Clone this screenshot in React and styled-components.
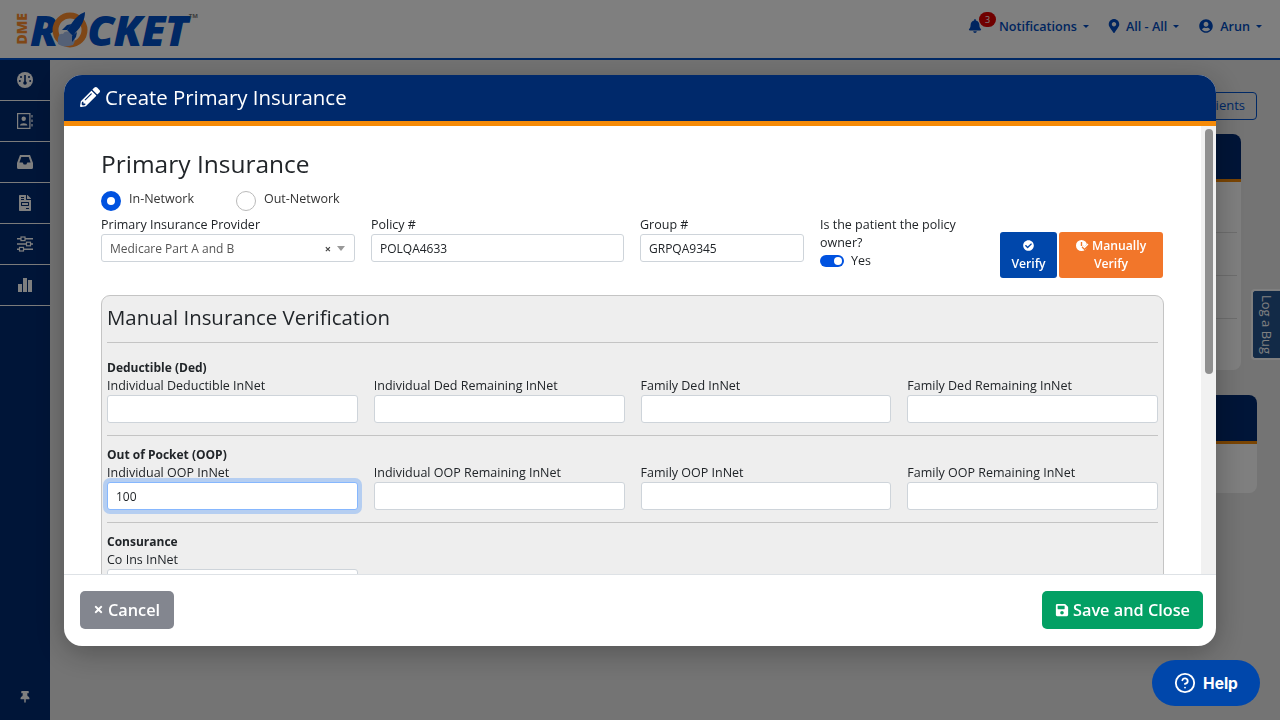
import React from 'react';
import styled, { createGlobalStyle } from 'styled-components';
import {
  FaPencilAlt, FaBell, FaMapMarkerAlt, FaUserCircle, FaFileInvoice, FaThumbtack, FaCheckCircle, FaSave, FaTimes,
} from 'react-icons/fa';
import { FiHelpCircle } from 'react-icons/fi';

const GlobalStyle = createGlobalStyle`
  html, body {
    margin: 0;
    height: 100%;
    overflow: hidden;
    font-family: "Open Sans", "Liberation Sans", sans-serif;
    color: #212529;
  }
  * { box-sizing: border-box; }
`;

const Page = styled.div`
  display: flex;
  flex-direction: column;
  height: 720px;
  background: #e9e9e9;
`;

const TopBar = styled.header`
  display: flex;
  align-items: center;
  justify-content: space-between;
  height: 60px;
  flex: none;
  padding: 0 18px 0 15px;
  background: #fff;
  border-bottom: 2px solid #0052cc;
`;

const Logo = styled.div`
  display: flex;
  align-items: center;
  color: #0050c8;
`;

const LogoDme = styled.span`
  writing-mode: vertical-rl;
  transform: rotate(180deg);
  margin-right: 2px;
  font-size: 14px;
  font-weight: 800;
  line-height: 13px;
  color: #ff8f2e;
`;

const LogoWord = styled.span`
  font-size: 43px;
  font-weight: 800;
  font-style: italic;
  letter-spacing: -0.8px;
`;

const LogoO = styled.svg`
  width: 37px;
  height: 37px;
  flex: none;
  margin: 1px -2px 0 -5px;
`;

const LogoTm = styled.sup`
  align-self: flex-start;
  margin: 12px 0 0 1px;
  font-size: 6px;
  line-height: 8px;
  font-weight: 700;
  color: #777;
`;

const NavLinks = styled.nav`
  display: flex;
  align-items: center;
  gap: 20px;
  margin-bottom: 6px;
`;

const NavLink = styled.div`
  display: flex;
  align-items: center;
  gap: 7px;
  font-size: 12.6px;
  font-weight: 600;
  color: #004bc0;
  svg { font-size: 14px; flex: none; margin: 0 ${p => p.$iconInset || 0}px; }
`;

const Caret = styled.span`
  width: 0;
  height: 0;
  margin-left: -1px;
  border-top: 3px solid currentColor;
  border-left: 3px solid transparent;
  border-right: 3px solid transparent;
`;

const BellWrap = styled.span`
  position: relative;
  display: flex;
  margin-right: 10px;
`;

const Badge = styled.span`
  position: absolute;
  top: -7px;
  left: 11px;
  width: 17px;
  height: 15px;
  border-radius: 8px;
  background: #e00000;
  color: #fff;
  font-size: 9px;
  font-weight: 500;
  line-height: 15px;
  text-align: center;
`;

const Columns = styled.div`
  display: flex;
  flex: 1;
  min-height: 0;
`;

const Sidebar = styled.aside`
  display: flex;
  flex-direction: column;
  width: 50px;
  flex: none;
  background: #002a70;
`;

const SideItem = styled.div`
  display: flex;
  align-items: center;
  justify-content: center;
  height: 41px;
  border-bottom: 1px solid #f6f6f6;
  color: #fff;
  font-size: 16px;
`;

const SidePin = styled.div`
  display: flex;
  justify-content: center;
  margin-top: auto;
  padding-bottom: 17px;
  color: #fff;
  font-size: 12px;
`;

const Main = styled.main`
  display: flex;
  flex-direction: column;
  align-items: flex-end;
  flex: 1;
  padding: 32px 23px 0 0;
`;

const OutlineButton = styled.div`
  height: 28px;
  padding: 0 11px;
  border: 1px solid #0052cc;
  border-radius: 4px;
  font-size: 13px;
  font-weight: 500;
  line-height: 25px;
  color: #0052cc;
`;

const BackCard = styled.div`
  width: 300px;
  margin-top: ${p => p.$top}px;
  margin-right: ${p => p.$right}px;
  height: ${p => p.$height}px;
  background: #fff;
  border-radius: 8px;
  overflow: hidden;
`;

const BackCardHead = styled.div`
  height: ${p => p.$height}px;
  background: #002a70;
  border-bottom: 3px solid #f58a07;
`;

const BackCardRows = styled.div`
  padding: 8px 4px 0 0;
`;

const BackCardRow = styled.div`
  height: 43px;
  border-bottom: 1px solid #ddd;
`;

const LogBug = styled.div`
  position: fixed;
  top: 289px;
  right: 0;
  width: 29px;
  height: 71px;
  background: #24548f;
  border: 2px solid #fff;
  border-right: none;
  border-radius: 4px 0 0 4px;
  writing-mode: vertical-rl;
  font-size: 13px;
  font-weight: 500;
  line-height: 27px;
  text-align: center;
  color: #fff;
`;

const Overlay = styled.div`
  position: fixed;
  inset: 0;
  display: flex;
  justify-content: center;
  align-items: flex-start;
  padding-top: 75px;
  background: rgba(0, 0, 0, 0.5);
`;

const Modal = styled.section`
  display: flex;
  flex-direction: column;
  width: 1152px;
  height: 571px;
  background: #fff;
  border-radius: 18px;
  overflow: hidden;
  box-shadow: 0 6px 30px rgba(0, 0, 0, 0.3);
`;

const ModalHeader = styled.div`
  display: flex;
  align-items: center;
  gap: 5px;
  flex: none;
  height: 51px;
  padding: 0 16px 3px;
  background: #00296b;
  border-bottom: 5px solid #f58a07;
  font-size: 20.4px;
  color: #fff;
  svg { font-size: 20px; }
`;

const ModalBody = styled.div`
  display: flex;
  flex: 1;
  min-height: 0;
`;

const FormArea = styled.div`
  flex: 1;
  min-width: 0;
  padding: 21px 37px 0;
  overflow: hidden;
`;

const ScrollTrack = styled.div`
  width: 15px;
  flex: none;
  padding: 3px 3px 0 4px;
  background: #f1f1f1;
`;

const ScrollThumb = styled.div`
  height: 245px;
  border-radius: 4px;
  background: #8f8f8f;
`;

const Title = styled.h2`
  margin: 0;
  font-size: 24.5px;
  font-weight: 400;
  line-height: 34px;
`;

const RadioRow = styled.div`
  display: flex;
  gap: 42px;
  margin-top: 10px;
  height: 22px;
`;

const RadioOption = styled.label`
  display: flex;
  align-items: flex-start;
  gap: 8px;
  font-size: 12.5px;
  line-height: 16px;
  color: #333;
`;

const RadioDot = styled.span`
  width: 20px;
  height: 20px;
  border-radius: 50%;
  background: #fff;
  border: ${p => (p.$on ? '6px solid #0052e0' : '1px solid #b9b9b9')};
`;

const TopFields = styled.div`
  display: flex;
  gap: 16px;
  margin-top: 3px;
`;

const Field = styled.div`
  width: ${p => (p.$width ? `${p.$width}px` : 'auto')};
  flex: none;
  min-width: 0;
`;

const Label = styled.label`
  display: block;
  font-size: 12.5px;
  line-height: 18px;
  white-space: ${p => (p.$wrap ? 'normal' : 'nowrap')};
  color: #212529;
`;

const Input = styled.input`
  display: block;
  width: 100%;
  height: 28px;
  padding: 0 8px;
  background: #fff;
  border: 1px solid ${p => (p.$focus ? '#86b7fe' : '#ced4da')};
  border-radius: 3px;
  box-shadow: ${p => (p.$focus ? '0 0 0 4px rgba(13, 110, 253, 0.25)' : 'none')};
  font-family: inherit;
  font-size: 12px;
  color: #212529;
  outline: none;
`;

const SelectBox = styled.div`
  display: flex;
  align-items: center;
  height: 28px;
  padding: 0 9px 0 8px;
  background: #fff;
  border: 1px solid #ced4da;
  border-radius: 3px;
  font-size: 12px;
  color: #555;
`;

const SelectClear = styled.span`
  margin-left: auto;
  margin-right: 6px;
  font-size: 11px;
  font-weight: 700;
  color: #444;
`;

const SelectArrow = styled.span`
  width: 0;
  height: 0;
  border-top: 5px solid #999;
  border-left: 4px solid transparent;
  border-right: 4px solid transparent;
`;

const ToggleRow = styled.div`
  display: flex;
  align-items: center;
  gap: 7px;
  font-size: 12.5px;
  line-height: 18px;
`;

const Toggle = styled.span`
  display: flex;
  justify-content: flex-end;
  align-items: center;
  width: 24px;
  height: 12px;
  padding-right: 2px;
  border-radius: 6px;
  background: #0052e0;
  &::after {
    content: '';
    width: 8px;
    height: 8px;
    border-radius: 50%;
    background: #fff;
  }
`;

const VerifyGroup = styled.div`
  display: flex;
  gap: 2px;
  margin: 16px 1px 0 auto;
  align-self: flex-start;
`;

const VerifyButton = styled.div`
  width: ${p => p.$width}px;
  height: 46px;
  padding-top: 5px;
  background: ${p => p.$bg};
  border-radius: 3px;
  font-size: 12.2px;
  font-weight: 600;
  line-height: 18px;
  text-align: center;
  color: #fff;
  svg { font-size: 11px; vertical-align: -1px; }
`;

const Panel = styled.div`
  margin-top: 17px;
  padding: 5px 5px 0;
  background: #eee;
  border: 1px solid #c4c4c4;
  border-radius: 9px;
`;

const PanelTitle = styled.h3`
  margin: 0;
  font-size: 20.4px;
  font-weight: 400;
  line-height: 33px;
`;

const Rule = styled.hr`
  height: 1px;
  margin: 8px 0 16px;
  border: none;
  background: #c4c4c4;
`;

const Section = styled.div`
  padding-bottom: 12px;
  margin-bottom: 10px;
  border-bottom: 1px solid #c4c4c4;
  &:last-child { border-bottom: none; margin-bottom: 0; }
`;

const SectionTitle = styled.div`
  font-size: 12px;
  font-weight: 700;
  line-height: 18px;
`;

const FieldGrid = styled.div`
  display: grid;
  grid-template-columns: repeat(4, minmax(0, 1fr));
  gap: 16px;
`;

const ModalFooter = styled.div`
  display: flex;
  justify-content: space-between;
  align-items: flex-start;
  flex: none;
  height: 72px;
  padding: 16px 13px 0 16px;
  border-top: 1px solid #dee2e6;
`;

const FooterButton = styled.div`
  display: flex;
  align-items: center;
  gap: ${p => p.$gap}px;
  min-width: ${p => p.$min || 0}px;
  height: 38px;
  padding: 0 13px 1px;
  background: ${p => p.$bg};
  border-radius: 5px;
  font-size: 16.3px;
  font-weight: 600;
  color: #fff;
  svg { font-size: ${p => p.$icon}px; }
`;

const HelpButton = styled.div`
  position: fixed;
  left: 1152px;
  top: 660px;
  display: flex;
  align-items: center;
  justify-content: center;
  gap: 7px;
  width: 108px;
  height: 46px;
  border-radius: 23px;
  background: #0047ab;
  font-family: Inter, sans-serif;
  font-size: 15.5px;
  font-weight: 700;
  color: #fff;
  svg { font-size: 22px; }
`;

const ManualIcon = () => (
  <svg width="13" height="11" viewBox="0 0 13 11" style={{ verticalAlign: '-1px' }}>
    <circle cx="5.5" cy="5.5" r="5.5" fill="#fff" />
    <path d="M5.5 2v4" stroke="#f2762a" strokeWidth="1.4" fill="none" />
    <path d="M6.5 6.5l2 2 4-4" stroke="#f2762a" strokeWidth="2.6" fill="none" />
    <path d="M7 6l1.5 1.5L12 4" stroke="#fff" strokeWidth="1.3" fill="none" />
  </svg>
);

const GaugeIcon = () => (
  <svg width="16" height="16" viewBox="0 0 16 16">
    <circle cx="8" cy="8" r="8" fill="#fff" />
    <path d="M8 3v7" stroke="#002a70" strokeWidth="1.6" />
    <circle cx="8" cy="11" r="1.8" fill="#002a70" />
    <circle cx="4" cy="5" r="1" fill="#002a70" />
    <circle cx="12" cy="5" r="1" fill="#002a70" />
    <circle cx="2.8" cy="9" r="1" fill="#002a70" />
    <circle cx="13.2" cy="9" r="1" fill="#002a70" />
  </svg>
);

const PortraitIcon = () => (
  <svg width="16" height="16" viewBox="0 0 16 16">
    <rect x="0.6" y="0.6" width="12.3" height="14.8" fill="none" stroke="#fff" strokeWidth="1.2" />
    <circle cx="6.7" cy="5.8" r="2.2" fill="#fff" />
    <path d="M3 12.4 C3 9.4 10.4 9.4 10.4 12.4 Z" fill="#fff" />
    <path d="M15 2v2.5M15 6.5v2.5M15 11v2.5" stroke="#fff" strokeWidth="1.2" />
  </svg>
);

const TrayIcon = () => (
  <svg width="16" height="14" viewBox="0 0 16 14">
    <path fillRule="evenodd" d="M3 0h10l3 8v4.500A1.500 1.500 0 0 1 14.500 14h-13A1.500 1.500 0 0 1 0 12.500V8zM4.300 2 2.400 7.500h3.300l1 2h2.600l1-2h3.300L11.700 2z" fill="#fff" />
  </svg>
);

const SlidersIcon = () => (
  <svg width="16" height="16" viewBox="0 0 16 16">
    <path d="M0 2.800h16M0 8h16M0 13.200h16" stroke="#fff" strokeWidth="1.500" />
    <rect x="4" y="1" width="4" height="3.600" fill="#002a70" stroke="#fff" strokeWidth="1.200" />
    <rect x="9.500" y="6.200" width="4" height="3.600" fill="#002a70" stroke="#fff" strokeWidth="1.200" />
    <rect x="2.500" y="11.400" width="4" height="3.600" fill="#002a70" stroke="#fff" strokeWidth="1.200" />
  </svg>
);

const BarsIcon = () => (
  <svg width="14" height="14" viewBox="0 0 14 14">
    <rect x="0" y="6" width="4" height="8" fill="#fff" />
    <rect x="5" y="0" width="4" height="14" fill="#fff" />
    <rect x="10" y="2" width="4" height="12" fill="#fff" />
  </svg>
);

const RocketO = () => (
  <LogoO viewBox="0 0 37 37">
    <circle cx="18" cy="19" r="14.500" fill="none" stroke="#ff8f2e" strokeWidth="6" />
    <path d="M6 33 C5 25 8 22 11 23 C13 19 18 20 20 24 C23 26 24 30 21 34 C15 36 10 36 6 33 Z" fill="#a8c0ec" />
    <path d="M33 1 C33 9 29 16 24 21 L21 25 L15 19 L18 15 C22 8 27 3 33 1 Z" fill="#0050c8" />
    <path d="M15 14 L20 13 L15 19 L10 19 Z" fill="#0050c8" />
    <path d="M25 21 L24 26 L20 31 L20 25 Z" fill="#0050c8" />
  </LogoO>
);

const deductibles = ['Individual Deductible InNet', 'Individual Ded Remaining InNet', 'Family Ded InNet', 'Family Ded Remaining InNet'];
const outOfPocket = ['Individual OOP InNet', 'Individual OOP Remaining InNet', 'Family OOP InNet', 'Family OOP Remaining InNet'];

const sideIcons = [GaugeIcon, PortraitIcon, TrayIcon, FaFileInvoice, SlidersIcon, BarsIcon];

const App = () => (
  <>
    <GlobalStyle />
    <Page>
      <TopBar>
        <Logo>
          <LogoDme>DME</LogoDme>
          <LogoWord>R</LogoWord>
          <RocketO />
          <LogoWord>CKET</LogoWord>
          <LogoTm>TM</LogoTm>
        </Logo>
        <NavLinks>
          <NavLink>
            <BellWrap><FaBell /><Badge>3</Badge></BellWrap>
            Notifications <Caret />
          </NavLink>
          <NavLink $iconInset={-2}><FaMapMarkerAlt /> All - All <Caret /></NavLink>
          <NavLink><FaUserCircle /> Arun <Caret /></NavLink>
        </NavLinks>
      </TopBar>
      <Columns>
        <Sidebar>
          {sideIcons.map((Icon, i) => (
            <SideItem key={i}><Icon /></SideItem>
          ))}
          <SidePin><FaThumbtack /></SidePin>
        </Sidebar>
        <Main>
          <OutlineButton>Clients</OutlineButton>
          <BackCard $top={14} $right={16} $height={236}>
            <BackCardHead $height={48} />
            <BackCardRows>
              <BackCardRow />
              <BackCardRow />
              <BackCardRow />
            </BackCardRows>
          </BackCard>
          <BackCard $top={25} $right={0} $height={98}>
            <BackCardHead $height={49} />
          </BackCard>
        </Main>
      </Columns>
    </Page>
    <LogBug>Log a Bug</LogBug>
    <Overlay>
      <Modal>
        <ModalHeader><FaPencilAlt /> Create Primary Insurance</ModalHeader>
        <ModalBody>
          <FormArea>
            <Title>Primary Insurance</Title>
            <RadioRow>
              <RadioOption><RadioDot $on />In-Network</RadioOption>
              <RadioOption><RadioDot />Out-Network</RadioOption>
            </RadioRow>
            <TopFields>
              <Field $width={254}>
                <Label>Primary Insurance Provider</Label>
                <SelectBox>Medicare Part A and B<SelectClear>×</SelectClear><SelectArrow /></SelectBox>
              </Field>
              <Field $width={253}>
                <Label>Policy #</Label>
                <Input readOnly value="POLQA4633" />
              </Field>
              <Field $width={164}>
                <Label>Group #</Label>
                <Input readOnly value="GRPQA9345" />
              </Field>
              <Field $width={160}>
                <Label $wrap>Is the patient the policy owner?</Label>
                <ToggleRow><Toggle />Yes</ToggleRow>
              </Field>
              <VerifyGroup>
                <VerifyButton $width={57} $bg="#0047ab"><FaCheckCircle /><br />Verify</VerifyButton>
                <VerifyButton $width={104} $bg="#f2762a"><ManualIcon /> Manually<br />Verify</VerifyButton>
              </VerifyGroup>
            </TopFields>
            <Panel>
              <PanelTitle>Manual Insurance Verification</PanelTitle>
              <Rule />
              <Section>
                <SectionTitle>Deductible (Ded)</SectionTitle>
                <FieldGrid>
                  {deductibles.map(name => (
                    <Field key={name}><Label>{name}</Label><Input readOnly /></Field>
                  ))}
                </FieldGrid>
              </Section>
              <Section>
                <SectionTitle>Out of Pocket (OOP)</SectionTitle>
                <FieldGrid>
                  {outOfPocket.map((name, i) => (
                    <Field key={name}>
                      <Label>{name}</Label>
                      <Input readOnly value={i === 0 ? '100' : ''} $focus={i === 0} />
                    </Field>
                  ))}
                </FieldGrid>
              </Section>
              <Section>
                <SectionTitle>Consurance</SectionTitle>
                <FieldGrid>
                  <Field><Label>Co Ins InNet</Label><Input readOnly /></Field>
                </FieldGrid>
              </Section>
            </Panel>
          </FormArea>
          <ScrollTrack><ScrollThumb /></ScrollTrack>
        </ModalBody>
        <ModalFooter>
          <FooterButton $bg="#83868f" $gap={4} $icon={11} $min={94}><FaTimes /> Cancel</FooterButton>
          <FooterButton $bg="#03a064" $gap={4} $icon={14}><FaSave /> Save and Close</FooterButton>
        </ModalFooter>
      </Modal>
    </Overlay>
    <HelpButton><FiHelpCircle /> Help</HelpButton>
  </>
);

export default App;
